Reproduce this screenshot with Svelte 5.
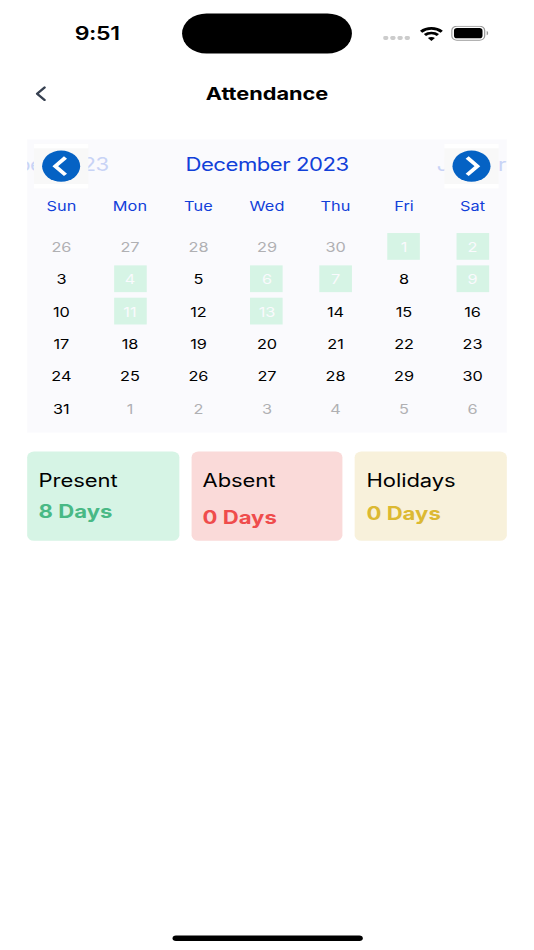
<script lang="ts">
	type Day = { day: number; outside: boolean; present: boolean };

	const weekdays = ['Sun', 'Mon', 'Tue', 'Wed', 'Thu', 'Fri', 'Sat'];
	const months = ['November 2023', 'December 2023', 'January 2024'];
	const presentDays = [1, 2, 4, 6, 7, 9, 11, 13];

	// December 2023 starts on a Friday, so five days of November lead the grid
	const days: Day[] = Array.from({ length: 42 }, (_, i) => {
		const n = i - 4;
		if (n < 1) return { day: n + 30, outside: true, present: false };
		if (n > 31) return { day: n - 31, outside: true, present: false };
		return { day: n, outside: false, present: presentDays.includes(n) };
	});

	const summary = [
		{ label: 'Present', count: presentDays.length, kind: 'present' },
		{ label: 'Absent', count: 0, kind: 'absent' },
		{ label: 'Holidays', count: 0, kind: 'holidays' },
	];
</script>

<div class="viewport">
	<div class="screen">
		<div class="status-bar">
			<div class="time">9:51</div>
			<div class="island"></div>
			<div class="status-icons">
				<svg class="signal" width="20" height="4" viewBox="0 0 20 4">
					{#each [0, 1, 2, 3] as i (i)}
						<rect x={i * 5.3} y="0.2" width="3.7" height="3.6" rx="1.3" />
					{/each}
				</svg>
				<svg class="wifi" width="17" height="13" viewBox="0 0 17 13">
					<path d="M.9 4.400C5.100 .5 11.900 .5 16.100 4.400" />
					<path d="M3.700 7.400c2.700-2.400 6.900-2.400 9.600 0" />
					<path class="base" d="M8.500 12.700 5.900 10.100c1.400-1.300 3.800-1.300 5.200 0z" />
				</svg>
				<svg class="battery" width="28" height="14" viewBox="0 0 28 14">
					<rect class="shell" x="0.5" y="0.5" width="24.200" height="12.600" rx="3.800" />
					<rect x="2.100" y="2.200" width="21" height="9.200" rx="2.300" />
					<path class="nub" d="M26.200 4.900c1.400.5 1.400 3.300 0 3.800z" />
				</svg>
			</div>
		</div>

		<header>
			<button class="back" aria-label="Back">
				<svg width="8" height="14" viewBox="0 0 8 14">
					<path d="M6.800 1.400 1.300 7l5.500 5.600" />
				</svg>
			</button>
			<h1>Attendance</h1>
		</header>

		<main>
			<section class="calendar">
				<div class="months">
					{#each months as month, i (month)}
						<div class="month" class:faded={i !== 1}>{month}</div>
					{/each}
				</div>
				<button class="arrow prev" aria-label="Previous month">
					<span class="disc">
						<svg width="28" height="28" viewBox="0 0 28 28"><path d="M17.200 6.200 9.700 14l7.500 7.800" /></svg>
					</span>
				</button>
				<button class="arrow next" aria-label="Next month">
					<span class="disc">
						<svg width="28" height="28" viewBox="0 0 28 28"><path d="m10.800 6.200 7.500 7.800-7.500 7.800" /></svg>
					</span>
				</button>

				<div class="weekdays">
					{#each weekdays as weekday (weekday)}
						<div>{weekday}</div>
					{/each}
				</div>
				<div class="days">
					{#each days as d, i (i)}
						<div class="cell">
							<span class="day" class:outside={d.outside} class:present={d.present}>{d.day}</span>
						</div>
					{/each}
				</div>
			</section>

			<section class="summary">
				{#each summary as item (item.kind)}
					<div class="card {item.kind}">
						<div class="label">{item.label}</div>
						<div class="count">{item.count} Days</div>
					</div>
				{/each}
			</section>
		</main>

		<div class="home-indicator"></div>
	</div>
</div>

<style>
	:global(body) {
		margin: 0;
		background: #fff;
	}

	.viewport {
		width: 534px;
		height: 950px;
		overflow: hidden;
	}

	/* 393x852 phone screen stretched over the whole viewport */
	.screen {
		display: flex;
		flex-direction: column;
		width: 393px;
		height: 852px;
		transform: scale(1.35878, 1.11502);
		transform-origin: 0 0;
		background: #fff;
		font-family: Inter, 'Liberation Sans', sans-serif;
		color: #000;
	}

	button {
		padding: 0;
		border: 0;
		background: none;
	}

	svg {
		display: block;
	}

	.status-bar {
		display: grid;
		grid-template-columns: 1fr 125px 1fr;
		align-items: center;
		height: 37px;
		padding-top: 11.5px;
	}

	.time {
		padding-left: 9px;
		text-align: center;
		font-size: 17px;
		font-weight: 600;
		line-height: 20px;
		letter-spacing: -0.3px;
	}

	.island {
		height: 36.6px;
		margin-top: -0.3px;
		border-radius: 19px;
		background: #000;
	}

	.status-icons {
		display: flex;
		align-items: center;
		padding-left: 23px;
	}

	.signal {
		margin: 8px 6.8px 0 0;
		fill: #ccc;
	}

	.wifi {
		margin-right: 6.7px;
		fill: none;
		stroke: #000;
		stroke-width: 2.4;
	}

	.wifi .base {
		fill: #000;
		stroke: none;
	}

	.battery .shell {
		fill: none;
		stroke: #999;
		stroke-width: 0.9;
	}

	.battery .nub {
		fill: #999;
	}

	header {
		display: grid;
		grid-template-columns: 60px 1fr 60px;
		align-items: center;
		height: 71px;
	}

	.back {
		padding-left: 25.7px;
	}

	.back path {
		fill: none;
		stroke: #374151;
		stroke-width: 1.9;
		stroke-linecap: round;
		stroke-linejoin: round;
	}

	h1 {
		margin: 0;
		padding-top: 0.5px;
		text-align: center;
		font-size: 16px;
		font-weight: 700;
		line-height: 20px;
		letter-spacing: -0.03px;
	}

	main {
		flex: 1;
		padding: 5px 20px 0;
	}

	.calendar {
		position: relative;
		height: 263.5px;
		overflow: hidden;
		background: #fafafd;
	}

	.months {
		display: grid;
		grid-template-columns: repeat(3, 176.5px);
		justify-content: center;
		padding-top: 11px;
	}

	.month {
		text-align: center;
		font-size: 16.3px;
		line-height: 22px;
		letter-spacing: -0.35px;
		color: #1140d9;
		white-space: nowrap;
	}

	.month.faded {
		color: #c8d3f6;
	}

	.arrow {
		position: absolute;
		top: 4.5px;
		display: flex;
		align-items: center;
		width: 40px;
		height: 40px;
		border: solid #fff;
		border-width: 4.5px 0;
		box-sizing: border-box;
		background: #f8f8f8;
	}

	.arrow.prev {
		left: 5px;
	}

	.arrow.next {
		right: 6.3px;
	}

	.disc {
		width: 28px;
		height: 28px;
		margin: 0 auto;
		border-radius: 50%;
		background: #0562c4;
	}

	.disc path {
		fill: none;
		stroke: #fff;
		stroke-width: 3.1;
	}

	.weekdays,
	.days {
		display: grid;
		grid-template-columns: repeat(7, 1fr);
		text-align: center;
	}

	.weekdays {
		padding-top: 19px;
		font-size: 12px;
		line-height: 16px;
		letter-spacing: 0.05px;
		color: #1140d9;
	}

	.days {
		padding-top: 13.7px;
	}

	.cell {
		display: flex;
		justify-content: center;
		align-items: center;
		height: 29px;
	}

	.day {
		width: 24px;
		height: 24px;
		font-size: 12px;
		line-height: 26px;
		letter-spacing: -0.05px;
	}

	.day.outside {
		color: #b0b0b3;
	}

	.day.present {
		background: #d6f4e5;
		color: #fafafd;
	}

	.summary {
		display: grid;
		grid-template-columns: repeat(3, 1fr);
		gap: 9px;
		margin-top: 17px;
	}

	.card {
		height: 80px;
		padding: 15.8px 8.4px 0;
		border-radius: 5px;
		box-sizing: border-box;
	}

	.label {
		font-size: 16.2px;
		line-height: 20px;
		letter-spacing: -0.05px;
	}

	.count {
		font-size: 16.3px;
		font-weight: 700;
		line-height: 20px;
	}

	.card.present {
		background: #d6f4e5;
	}

	.present .count {
		margin-top: 8.2px;
		color: #49b985;
	}

	.card.absent {
		background: #fadad9;
	}

	.absent .count {
		margin-top: 13.2px;
		color: #ef4c4c;
	}

	.card.holidays {
		background: #f8f1db;
	}

	.holidays .count {
		margin-top: 9.5px;
		color: #dcb932;
	}

	.home-indicator {
		width: 140px;
		height: 5px;
		margin: 0 auto 8.3px;
		border-radius: 3px;
		background: #000;
	}
</style>
